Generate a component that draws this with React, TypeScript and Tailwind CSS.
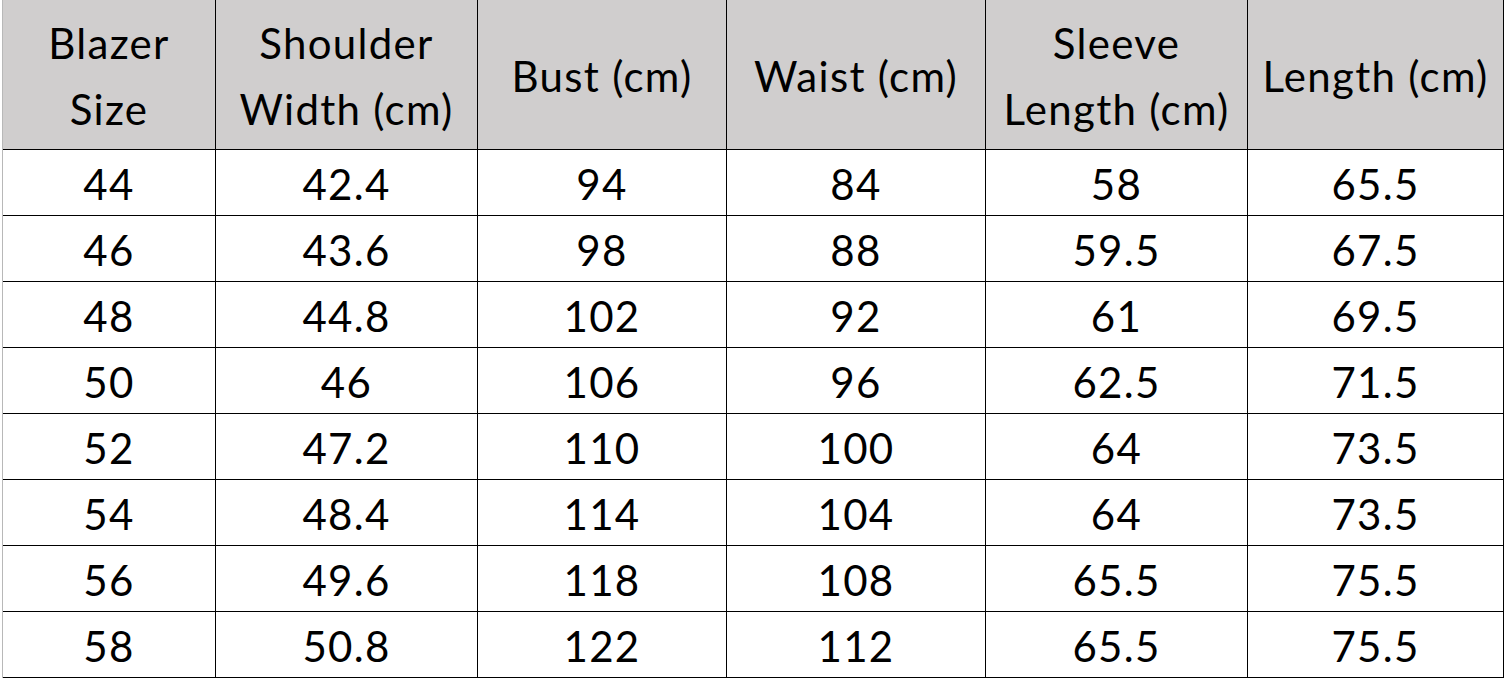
const headers = [
  ['Blazer', 'Size'],
  ['Shoulder', 'Width (cm)'],
  ['Bust (cm)'],
  ['Waist (cm)'],
  ['Sleeve', 'Length (cm)'],
  ['Length (cm)'],
];

const rows = [
  ['44', '42.4', '94', '84', '58', '65.5'],
  ['46', '43.6', '98', '88', '59.5', '67.5'],
  ['48', '44.8', '102', '92', '61', '69.5'],
  ['50', '46', '106', '96', '62.5', '71.5'],
  ['52', '47.2', '110', '100', '64', '73.5'],
  ['54', '48.4', '114', '104', '64', '73.5'],
  ['56', '49.6', '118', '108', '65.5', '75.5'],
  ['58', '50.8', '122', '112', '65.5', '75.5'],
];

export default function App() {
  return (
    <div className="w-[1505px] h-[680px] bg-white overflow-hidden">
      <div
        className="ml-[2px] border-l border-[#b8b8b8] w-[1502px] grid grid-cols-[213px_262px_249px_259px_262px_256px] text-black text-[42px] tracking-[1.3px]"
        style={{ fontFamily: 'Lato, "Open Sans", sans-serif' }}
      >
        {headers.map((lines, i) => (
          <div
            key={i}
            className="h-[150px] bg-[#d0cece] border-r border-b border-black flex flex-col items-center justify-center leading-[66px] pt-[2px]"
          >
            {lines.map((l) => (
              <span key={l}>{l}</span>
            ))}
          </div>
        ))}
        {rows.map((r, ri) =>
          r.map((v, ci) => (
            <div
              key={`${ri}-${ci}`}
              className="h-[66px] border-r border-b border-black flex items-center justify-center pt-[4px]"
            >
              {v}
            </div>
          ))
        )}
      </div>
    </div>
  );
}
